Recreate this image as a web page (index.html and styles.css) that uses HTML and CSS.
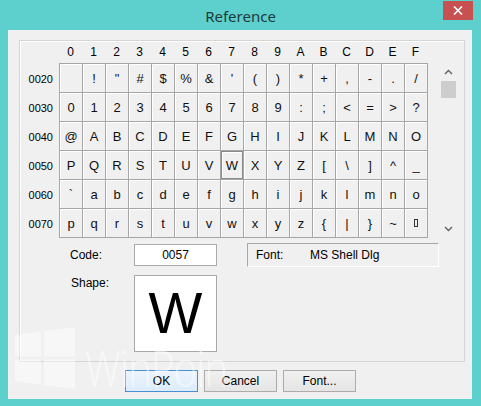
FILE: index.html
```html
<!DOCTYPE html>
<html>
<head>
<meta charset="utf-8">
<title>Reference</title>
<link rel="stylesheet" href="styles.css">
</head>
<body>
<div class="window">
  <div class="titlebar">
    <div></div>
    <div class="title">Reference</div>
    <div class="close"><svg width="10" height="9" viewBox="0 0 10 9"><path d="M1 0.5 L9 8.5 M9 0.5 L1 8.5" stroke="#fff" stroke-width="1.6" fill="none"/></svg></div>
  </div>
  <div class="client">
    <div class="group">
      <div class="header">
        <span></span>
        <span>0</span><span>1</span><span>2</span><span>3</span><span>4</span><span>5</span><span>6</span><span>7</span>
        <span>8</span><span>9</span><span>A</span><span>B</span><span>C</span><span>D</span><span>E</span><span>F</span>
      </div>
      <div class="chart">
        <div class="rowlabels">
          <span>0020</span><span>0030</span><span>0040</span><span>0050</span><span>0060</span><span>0070</span>
        </div>
        <div class="grid">
          <span class="cell"></span><span class="cell">!</span><span class="cell">&quot;</span><span class="cell">#</span><span class="cell">$</span><span class="cell">%</span><span class="cell">&amp;</span><span class="cell">'</span><span class="cell">(</span><span class="cell">)</span><span class="cell">*</span><span class="cell">+</span><span class="cell">,</span><span class="cell">-</span><span class="cell">.</span><span class="cell">/</span>
          <span class="cell">0</span><span class="cell">1</span><span class="cell">2</span><span class="cell">3</span><span class="cell">4</span><span class="cell">5</span><span class="cell">6</span><span class="cell">7</span><span class="cell">8</span><span class="cell">9</span><span class="cell">:</span><span class="cell">;</span><span class="cell">&lt;</span><span class="cell">=</span><span class="cell">&gt;</span><span class="cell">?</span>
          <span class="cell">@</span><span class="cell">A</span><span class="cell">B</span><span class="cell">C</span><span class="cell">D</span><span class="cell">E</span><span class="cell">F</span><span class="cell">G</span><span class="cell">H</span><span class="cell">I</span><span class="cell">J</span><span class="cell">K</span><span class="cell">L</span><span class="cell">M</span><span class="cell">N</span><span class="cell">O</span>
          <span class="cell">P</span><span class="cell">Q</span><span class="cell">R</span><span class="cell">S</span><span class="cell">T</span><span class="cell">U</span><span class="cell">V</span><span class="cell sel">W</span><span class="cell">X</span><span class="cell">Y</span><span class="cell">Z</span><span class="cell">[</span><span class="cell">\</span><span class="cell">]</span><span class="cell">^</span><span class="cell">_</span>
          <span class="cell">`</span><span class="cell">a</span><span class="cell">b</span><span class="cell">c</span><span class="cell">d</span><span class="cell">e</span><span class="cell">f</span><span class="cell">g</span><span class="cell">h</span><span class="cell">i</span><span class="cell">j</span><span class="cell">k</span><span class="cell">l</span><span class="cell">m</span><span class="cell">n</span><span class="cell">o</span>
          <span class="cell">p</span><span class="cell">q</span><span class="cell">r</span><span class="cell">s</span><span class="cell">t</span><span class="cell">u</span><span class="cell">v</span><span class="cell">w</span><span class="cell">x</span><span class="cell">y</span><span class="cell">z</span><span class="cell">{</span><span class="cell">|</span><span class="cell">}</span><span class="cell">~</span><span class="cell"><i class="delbox"></i></span>
        </div>
        <div class="scroll">
          <div class="arrow"><svg width="9" height="6" viewBox="0 0 9 6"><path d="M1 5 L4.5 1.5 L8 5" stroke="#606060" stroke-width="1.4" fill="none"/></svg></div>
          <div class="thumb"></div>
          <div class="track"></div>
          <div class="arrow"><svg width="9" height="6" viewBox="0 0 9 6"><path d="M1 1 L4.5 4.5 L8 1" stroke="#606060" stroke-width="1.4" fill="none"/></svg></div>
        </div>
      </div>
      <div class="lower">
        <span class="label">Code:</span>
        <div class="codebox">0057</div>
        <span></span>
        <div class="fontbox"><span class="fontlabel">Font:</span><span>MS Shell Dlg</span></div>
        <span class="label top">Shape:</span>
        <div class="shapebox">W</div>
      </div>
    </div>
    <div class="buttons">
      <button class="btn default">OK</button>
      <button class="btn">Cancel</button>
      <button class="btn">Font...</button>
    </div>
    <div class="watermark">
      <svg class="wlogo" width="60" height="62" viewBox="0 0 60 62">
        <polygon points="0,8 26,4.5 26,29.5 0,29.5"/>
        <polygon points="29,4 60,0 60,29.5 29,29.5"/>
        <polygon points="0,32.5 26,32.5 26,57.5 0,54"/>
        <polygon points="29,32.5 60,32.5 60,62 29,58"/>
      </svg>
      <span class="wtext">WinPoin</span>
    </div>
  </div>
</div>
</body>
</html>
```
FILE: styles.css
```css
* { box-sizing: border-box; }
html, body { margin: 0; padding: 0; }
body {
  width: 481px;
  height: 406px;
  overflow: hidden;
  background: #5dcfcc;
  font-family: "Liberation Sans", Arial, sans-serif;
  font-size: 12px;
  color: #000;
}
.window { height: 406px; display: flex; flex-direction: column; }
.titlebar {
  height: 30px;
  display: grid;
  grid-template-columns: 1fr auto 1fr;
  align-items: center;
}
.title {
  font-family: "Noto Sans", "Open Sans", sans-serif;
  font-size: 15px;
  color: #1d3b3b;
  padding-top: 1px;
}
.close {
  justify-self: end;
  align-self: start;
  margin-top: 1px;
  margin-right: 8px;
  width: 30px;
  height: 19px;
  background: #c75050;
  display: flex;
  align-items: center;
  justify-content: center;
}
.client {
  position: relative;
  margin: 0 9px 7px 8px;
  height: 369px;
  background: #f0f0f0;
  padding: 10px 0 0 11px;
  overflow: hidden;
}
.group {
  width: 446px;
  height: 322px;
  border: 1px solid #d5d5d5;
  box-shadow: inset 1px 1px 0 #fff;
}
.header {
  display: grid;
  grid-template-columns: 39px repeat(16, 23px);
  height: 22px;
  align-items: center;
}
.header span { text-align: center; }
.chart { display: flex; height: 175px; }
.rowlabels {
  width: 39px;
  display: grid;
  grid-auto-rows: 29px;
  padding-top: 1px;
}
.rowlabels span {
  font-size: 11px;
  display: flex;
  align-items: center;
  justify-content: flex-end;
  padding-right: 6px;
}
.grid {
  display: grid;
  grid-template-columns: repeat(16, 23px);
  grid-auto-rows: 29px;
  border-top: 1px solid #a6a6a6;
  border-left: 1px solid #a6a6a6;
  align-self: flex-start;
}
.cell {
  border-right: 1px solid #a6a6a6;
  border-bottom: 1px solid #a6a6a6;
  box-shadow: inset 1px 1px 0 #fff;
  display: flex;
  align-items: center;
  justify-content: center;
  font-size: 13px;
  color: #111;
}
.cell.sel {
  box-shadow: inset 0 0 0 1px #8a8a8a, inset 2px 2px 0 #fff;
}
.delbox {
  display: block;
  width: 4px;
  height: 8px;
  border: 1px solid #333;
}
.scroll {
  margin-left: 11px;
  width: 19px;
  display: flex;
  flex-direction: column;
  align-items: center;
}
.arrow {
  height: 18px;
  width: 19px;
  display: flex;
  align-items: center;
  justify-content: center;
}
.thumb { width: 15px; height: 17px; background: #cdcdcd; }
.track { flex: 1; }
.lower {
  display: grid;
  grid-template-columns: 64px 83px 30px 192px;
  grid-template-rows: 24px 77px;
  row-gap: 8px;
  margin-top: 5px;
  padding-left: 50px;
}
.label { align-self: center; }
.label.top { align-self: start; padding-top: 1px; padding-left: 1px; }
.codebox {
  align-self: center;
  height: 22px;
  border: 1px solid #ababab;
  background: #fff;
  display: flex;
  justify-content: center;
  padding-top: 3px;
}
.fontbox {
  height: 24px;
  border-top: 1px solid #a8a8a8;
  border-left: 1px solid #a8a8a8;
  border-bottom: 1px solid #fff;
  border-right: 1px solid #fff;
  display: flex;
  align-items: center;
  padding-left: 8px;
}
.fontlabel { width: 54px; }
.shapebox {
  height: 77px;
  background: #fff;
  border: 1px solid #a8a8a8;
  display: flex;
  align-items: center;
  justify-content: center;
  font-size: 57px;
  line-height: 1;
}
.buttons {
  display: flex;
  gap: 6px;
  margin-top: 8px;
  padding-left: 106px;
}
.btn {
  width: 73px;
  height: 22px;
  border: 1px solid #acacac;
  background: linear-gradient(#f0f0f0, #e5e5e5);
  font-family: "Liberation Sans", Arial, sans-serif;
  font-size: 12px;
  color: #000;
  padding: 0;
}
.btn.default { border-color: #4a90d0; background: linear-gradient(#ecf4fc, #dcecfc); }
.watermark {
  position: absolute;
  left: 7px;
  top: 297px;
  display: flex;
  align-items: flex-end;
  gap: 10px;
  pointer-events: none;
}
.wlogo polygon { fill: rgba(255, 255, 255, 0.45); }
.wtext {
  font-family: "Open Sans", sans-serif;
  font-weight: 300;
  font-size: 50px;
  letter-spacing: -1px;
  line-height: 50px;
  color: rgba(255, 255, 255, 0.5);
  margin-bottom: -4px;
  transform: scaleX(0.8);
  transform-origin: left bottom;
}
```
